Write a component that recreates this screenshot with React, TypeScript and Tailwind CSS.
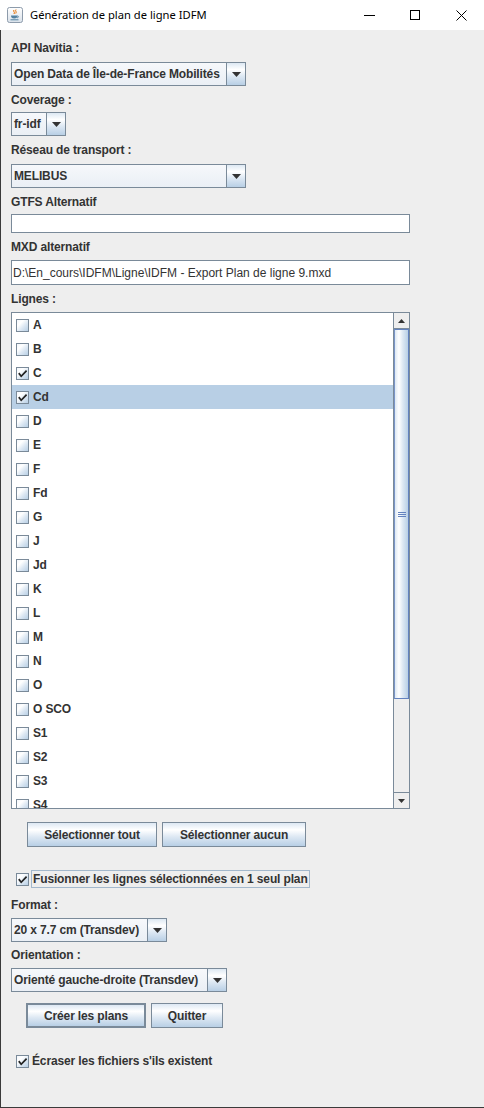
import React from "react";

const GRAD_V = "bg-[linear-gradient(to_bottom,#dde8f3_0%,#ffffff_30%,#dde8f3_60%,#b8cfe5_100%)]";
const BOLD = "text-[12px] font-bold text-[#333333] tracking-[-0.14px] whitespace-nowrap";

function Label({ children, mt }: { children: React.ReactNode; mt: string }) {
  return <div className={`${mt} h-[15px] leading-[15px] ${BOLD}`}>{children}</div>;
}

function Arrow() {
  return (
    <svg width="9" height="5" viewBox="0 0 9 5">
      <path d="M0 0 H9 L4.5 5 Z" fill="#333333" />
    </svg>
  );
}

function Combo({ text, w, mt }: { text: string; w: string; mt: string }) {
  return (
    <div className={`${mt} ${w} h-[24px] flex border border-[#7a8a99] bg-[linear-gradient(to_bottom,#f6f8fb,#eaeff5)]`}>
      <div className={`flex-1 pl-[2px] flex items-center overflow-hidden ${BOLD}`}>{text}</div>
      <div className={`w-[19px] border-l border-[#7a8a99] flex items-center justify-center ${GRAD_V}`}>
        <Arrow />
      </div>
    </div>
  );
}

function Check({ checked }: { checked?: boolean }) {
  return (
    <span className="w-[13px] h-[13px] border border-[#7a8a99] flex items-center justify-center shrink-0 bg-[linear-gradient(135deg,#f4f7fb_0%,#ffffff_30%,#dde8f3_60%,#b8cfe5_100%)]">
      {checked && (
        <svg width="9" height="9" viewBox="0 0 9 9">
          <path d="M1.3 4.8 L3.2 7.3 L8 2.2" stroke="#222222" strokeWidth="1.7" fill="none" strokeLinecap="square" />
        </svg>
      )}
    </span>
  );
}

function Button({ children, w, def }: { children: React.ReactNode; w: string; def?: boolean }) {
  return (
    <div
      className={`${w} h-[25px] flex items-center justify-center ${BOLD} ${GRAD_V} ${
        def ? "border-2 border-[#7a8a99]" : "border border-[#7a8a99]"
      }`}
    >
      {children}
    </div>
  );
}

const LINES: { name: string; checked?: boolean; selected?: boolean }[] = [
  { name: "A" },
  { name: "B" },
  { name: "C", checked: true },
  { name: "Cd", checked: true, selected: true },
  { name: "D" },
  { name: "E" },
  { name: "F" },
  { name: "Fd" },
  { name: "G" },
  { name: "J" },
  { name: "Jd" },
  { name: "K" },
  { name: "L" },
  { name: "M" },
  { name: "N" },
  { name: "O" },
  { name: "O SCO" },
  { name: "S1" },
  { name: "S2" },
  { name: "S3" },
  { name: "S4" },
];

function JavaIcon() {
  return (
    <svg width="16" height="16" viewBox="0 0 16 16">
      <defs>
        <linearGradient id="jg" x1="0" y1="0" x2="0" y2="1">
          <stop offset="0" stopColor="#ffffff" />
          <stop offset="1" stopColor="#d9e1ea" />
        </linearGradient>
      </defs>
      <rect x="0.5" y="0.5" width="15" height="15" rx="2" fill="url(#jg)" stroke="#8d9bab" />
      <path d="M7 3 C5.5 4.5 8.5 5 7 7 M9 2.5 C7.8 3.8 10 4.5 8.8 6.5" stroke="#e76f00" strokeWidth="1" fill="none" />
      <path d="M4 8.5 H10.5 C10.5 10.5 9.5 11.5 7.2 11.5 C5 11.5 4 10.5 4 8.5 Z" fill="#5382a1" />
      <path d="M10.3 9 C12 9 12 10.5 10 10.8" stroke="#5382a1" strokeWidth="0.9" fill="none" />
      <path d="M3.5 12.8 H11.5" stroke="#5382a1" strokeWidth="1" />
    </svg>
  );
}

export default function App() {
  return (
    <div className="w-[484px] h-[1108px] flex flex-col font-['Liberation_Sans',Arial,sans-serif] bg-white overflow-hidden">
      {/* Title bar */}
      <div className="h-[30px] bg-white flex items-center shrink-0">
        <div className="ml-[7px] w-[16px] h-[16px]">
          <JavaIcon />
        </div>
        <div className="ml-[7px] text-[11.2px] text-black font-['Noto_Sans',sans-serif] whitespace-nowrap">
          Génération de plan de ligne IDFM
        </div>
        <div className="ml-auto flex h-[30px]">
          <div className="w-[46px] h-[30px] flex items-center justify-center">
            <svg width="11" height="11" viewBox="0 0 11 11">
              <path d="M0 5.5 H11" stroke="#000" strokeWidth="1" />
            </svg>
          </div>
          <div className="w-[46px] h-[30px] flex items-center justify-center">
            <svg width="10" height="10" viewBox="0 0 10 10">
              <rect x="0.5" y="0.5" width="9" height="9" stroke="#000" strokeWidth="1" fill="none" />
            </svg>
          </div>
          <div className="w-[46px] h-[30px] flex items-center justify-center">
            <svg width="11" height="11" viewBox="0 0 11 11">
              <path d="M0.5 0.5 L10.5 10.5 M10.5 0.5 L0.5 10.5" stroke="#000" strokeWidth="1" />
            </svg>
          </div>
        </div>
      </div>

      {/* Content */}
      <div className="flex-1 bg-[#eeeeee] border-l border-b border-[#3a3a3a] pl-[10px] flex flex-col items-start">
        <Label mt="mt-[11px]">API Navitia :</Label>
        <Combo mt="mt-[6px]" w="w-[235px]" text="Open Data de Île-de-France Mobilités" />
        <Label mt="mt-[7px]">Coverage :</Label>
        <Combo mt="mt-[4px]" w="w-[55px]" text="fr-idf" />
        <Label mt="mt-[7px]">Réseau de transport :</Label>
        <Combo mt="mt-[6px]" w="w-[235px]" text="MELIBUS" />
        <Label mt="mt-[7px]">GTFS Alternatif</Label>
        <div className="mt-[4px] w-[399px] h-[19px] bg-white border border-[#7a8a99]" />
        <Label mt="mt-[7px]">MXD alternatif</Label>
        <div className="mt-[5px] w-[399px] h-[25px] bg-white border border-[#7a8a99] pl-[1px] flex items-center text-[12px] text-[#333333] whitespace-nowrap">
          D:\En_cours\IDFM\Ligne\IDFM - Export Plan de ligne 9.mxd
        </div>
        <Label mt="mt-[7px]">Lignes :</Label>

        {/* List */}
        <div className="mt-[5px] w-[399px] h-[497px] bg-white border border-[#7a8a99] flex">
          <div className="flex-1 overflow-hidden">
            {LINES.map((l) => (
              <div
                key={l.name}
                className={`h-[24px] flex items-center pl-[4px] ${l.selected ? "bg-[#b8cfe5]" : ""}`}
              >
                <Check checked={l.checked} />
                <span className={`ml-[4px] ${BOLD}`}>{l.name}</span>
              </div>
            ))}
          </div>
          {/* Scrollbar */}
          <div className="w-[16px] border-l border-[#7a8a99] flex flex-col bg-[#eeeeee]">
            <div className="h-[16px] border-b border-[#7a8a99] flex items-center justify-center">
              <svg width="7" height="4" viewBox="0 0 7 4">
                <path d="M0 4 H7 L3.5 0 Z" fill="#333333" />
              </svg>
            </div>
            <div className="h-[370px] border border-[#6382bf] border-l-[#7a95c8] flex items-center justify-center bg-[linear-gradient(to_right,#dde8f3_0%,#ffffff_30%,#dde8f3_60%,#b8cfe5_100%)]">
              <div className="flex flex-col gap-[1px]">
                <div className="w-[8px] h-[1px] bg-[#6382bf]" />
                <div className="w-[8px] h-[1px] bg-[#6382bf]" />
                <div className="w-[8px] h-[1px] bg-[#6382bf]" />
              </div>
            </div>
            <div className="flex-1" />
            <div className="h-[16px] border-t border-[#7a8a99] flex items-center justify-center">
              <svg width="7" height="4" viewBox="0 0 7 4">
                <path d="M0 0 H7 L3.5 4 Z" fill="#333333" />
              </svg>
            </div>
          </div>
        </div>

        <div className="mt-[13px] ml-[16px] flex gap-[5px]">
          <Button w="w-[130px]">Sélectionner tout</Button>
          <Button w="w-[144px]">Sélectionner aucun</Button>
        </div>

        <div className="mt-[23px] ml-[5px] h-[18px] flex items-center">
          <Check checked />
          <div className={`ml-[2px] h-[18px] border border-[#a3b8cc] pl-[1px] pr-[1px] flex items-center ${BOLD}`}>
            Fusionner les lignes sélectionnées en 1 seul plan
          </div>
        </div>

        <Label mt="mt-[10px]">Format :</Label>
        <Combo mt="mt-[5px]" w="w-[156px]" text="20 x 7.7 cm (Transdev)" />
        <Label mt="mt-[6px]">Orientation :</Label>
        <Combo mt="mt-[5px]" w="w-[216px]" text="Orienté gauche-droite (Transdev)" />

        <div className="mt-[11px] ml-[15px] flex gap-[5px]">
          <Button w="w-[120px]" def>
            Créer les plans
          </Button>
          <Button w="w-[72px]">Quitter</Button>
        </div>

        <div className="mt-[24px] ml-[5px] h-[18px] flex items-center">
          <Check checked />
          <span className={`ml-[3px] ${BOLD}`}>Écraser les fichiers s'ils existent</span>
        </div>
      </div>
    </div>
  );
}
